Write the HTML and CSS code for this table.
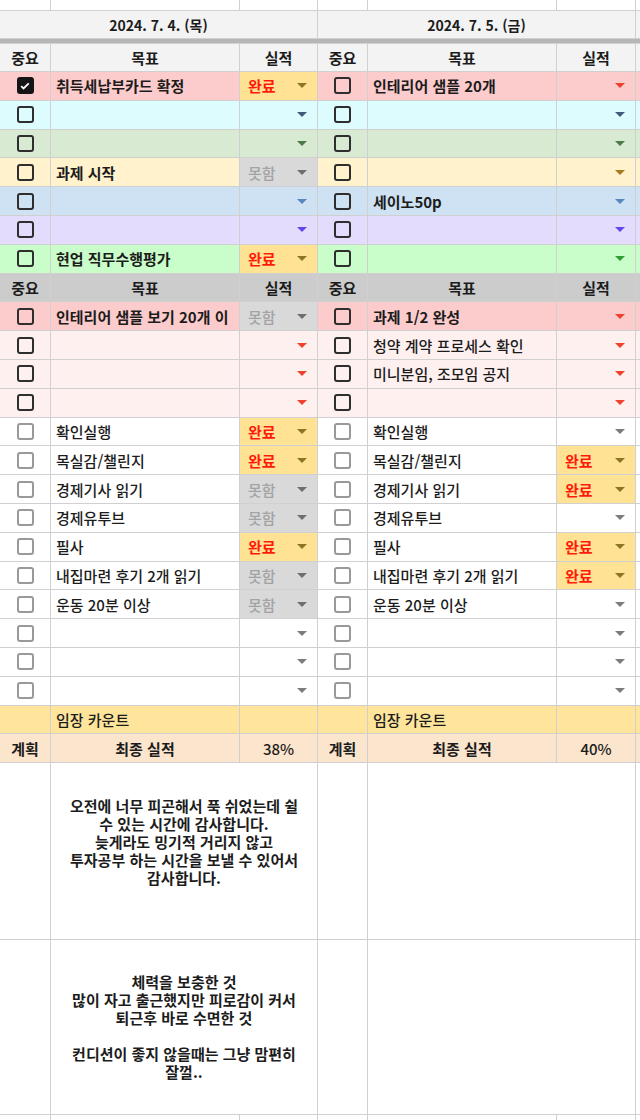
FILE: index.html
```html
<!DOCTYPE html>
<html lang="ko">
<head>
    <meta charset="UTF-8">
    <meta name="viewport" content="width=device-width, initial-scale=1.0">
    <title>Daily Goals</title>
    <link rel="stylesheet" href="styles.css">
</head>
<body>

<div class="sheet" id="sheet"></div>

<script>
    const days = [
        {
            date: '2024. 7. 4. (목)',
            top: [
                {c: true, t: '취득세납부카드 확정', s: 'done'},
                {}, {},
                {t: '과제 시작', s: 'miss'},
                {}, {},
                {t: '현업 직무수행평가', s: 'done'}
            ],
            mid: [{t: '인테리어 샘플 보기 20개 이', s: 'miss'}, {}, {}, {}],
            routine: [
                {t: '확인실행', s: 'done'},
                {t: '목실감/챌린지', s: 'done'},
                {t: '경제기사 읽기', s: 'miss'},
                {t: '경제유투브', s: 'miss'},
                {t: '필사', s: 'done'},
                {t: '내집마련 후기 2개 읽기', s: 'miss'},
                {t: '운동 20분 이상', s: 'miss'},
                {}, {}, {}
            ],
            rate: '38%',
            notes: [
                '오전에 너무 피곤해서 푹 쉬었는데 쉴<br>수 있는 시간에 감사합니다.<br>늦게라도 밍기적 거리지 않고<br>투자공부 하는 시간을 보낼 수 있어서<br>감사합니다.<br>&nbsp;',
                '체력을 보충한 것<br>많이 자고 출근했지만 피로감이 커서<br>퇴근후 바로 수면한 것<br>&nbsp;<br>컨디션이 좋지 않을때는 그냥 맘편히<br>잘껄..'
            ]
        },
        {
            date: '2024. 7. 5. (금)',
            top: [
                {t: '인테리어 샘플 20개'},
                {}, {}, {},
                {t: '세이노50p'},
                {}, {}
            ],
            mid: [{t: '과제 1/2 완성'}, {t: '청약 계약 프로세스 확인'}, {t: '미니분임, 조모임 공지'}, {}],
            routine: [
                {t: '확인실행'},
                {t: '목실감/챌린지', s: 'done'},
                {t: '경제기사 읽기', s: 'done'},
                {t: '경제유투브'},
                {t: '필사', s: 'done'},
                {t: '내집마련 후기 2개 읽기', s: 'done'},
                {t: '운동 20분 이상'},
                {}, {}, {}
            ],
            rate: '40%',
            notes: ['', '']
        }
    ];

    const topColors = ['pink', 'cyan', 'green', 'yellow', 'blue', 'purple', 'lime'];
    const midColors = ['pink', 'rose', 'rose', 'rose'];
    const sheet = document.getElementById('sheet');

    function add(cls, html) {
        const d = document.createElement('div');
        d.className = 'cell ' + cls;
        if (html) d.innerHTML = html;
        sheet.appendChild(d);
    }

    function box(checked, light) {
        if (checked) {
            return '<span class="box checked"><svg viewBox="0 0 16 16" width="12" height="12"><path d="M3 8.2l3 3L13 4.5" stroke="#fff" stroke-width="2.4" fill="none"/></svg></span>';
        }
        return '<span class="box' + (light ? ' light' : '') + '"></span>';
    }

    function itemRow(color, item, opts) {
        add(color + ' center', box(item.c, opts.light));
        add(color + ' goal' + (opts.bold ? ' bold' : ''), item.t || '');
        let label = '';
        if (item.s === 'done') label = '<span>완료</span>';
        if (item.s === 'miss') label = '<span>못함</span>';
        add(color + ' status ' + (item.s || ''), label + '<span class="arrow"></span>');
    }

    function header(cls) {
        days.forEach(() => {
            add(cls + ' center bold', '중요');
            add(cls + ' center bold', '목표');
            add(cls + ' center bold', '실적');
        });
        add(cls);
    }

    // top partial row
    for (let i = 0; i < 7; i++) add('');

    days.forEach(day => add('date span3 center bold', day.date));
    add('date');
    add('band span-all');

    header('head-light');
    topColors.forEach((color, i) => {
        days.forEach(day => itemRow(color, day.top[i], {bold: true}));
        add(color);
    });

    header('head-dark');
    midColors.forEach((color, i) => {
        days.forEach(day => itemRow(color, day.mid[i], {bold: color === 'pink'}));
        add(color);
    });

    for (let i = 0; i < 10; i++) {
        days.forEach(day => itemRow('plain', day.routine[i], {light: true}));
        add('plain');
    }

    days.forEach(() => {
        add('count');
        add('count goal', '임장 카운트');
        add('count');
    });
    add('count');

    days.forEach(day => {
        add('plan center bold', '계획');
        add('plan center bold', '최종 실적');
        add('plan center', day.rate);
    });
    add('plan');

    for (let n = 0; n < 2; n++) {
        days.forEach(day => {
            add('');
            add('note span2', day.notes[n]);
        });
        add('');
    }

    for (let i = 0; i < 7; i++) add('');
</script>

</body>
</html>
```

FILE: styles.css
```css
body {
    margin: 0;
    font-family: "Noto Sans CJK KR", "Noto Sans", sans-serif;
    color: #1c1c1c;
}
.sheet {
    display: grid;
    grid-template-columns: 50px 188px 77px 49px 188px 78px 1fr;
    grid-template-rows: 10px 27px 4px 27px repeat(24, 27.8px) 176px 174px 20px;
    gap: 1px;
    width: 640px;
    height: 1120px;
    overflow: hidden;
    background: #d0d0d0;
}
.cell {
    display: flex;
    align-items: center;
    min-width: 0;
    overflow: hidden;
    white-space: nowrap;
    font-size: 15px;
    font-weight: 500;
    line-height: 1;
    background: #fff;
}
.center {
    justify-content: center;
}
.bold {
    font-weight: bold;
}
.span2 {
    grid-column: span 2;
}
.span3 {
    grid-column: span 3;
}
.span-all {
    grid-column: 1 / -1;
}
.goal {
    padding-left: 5px;
}

/* header rows */
.date {
    background: #f3f3f3;
    font-size: 14px;
}
.band {
    background: #b6b6b6;
}
.head-light {
    background: #f3f3f3;
}
.head-dark {
    background: #cccccc;
}

/* row colours */
.pink { background: #fccccc; --arrow: #f0412f; }
.cyan { background: #dcfcfd; --arrow: #3f5c7c; }
.green { background: #d9ead3; --arrow: #4c7a4c; }
.yellow { background: #fff2cc; --arrow: #a57d1c; }
.blue { background: #cfe2f3; --arrow: #5985c0; }
.purple { background: #e3dcfd; --arrow: #6546ee; }
.lime { background: #c9fdc9; --arrow: #2f9f35; }
.rose { background: #fff0f0; --arrow: #f0412f; }
.plain { --arrow: #7c7c7c; }
.count { background: #ffe59c; }
.plan { background: #fce5cd; }

/* status dropdown */
.status {
    justify-content: space-between;
    padding: 0 10px 0 8px;
}
.status.done {
    background: #ffe294;
    color: #ff1a0a;
    font-weight: bold;
    --arrow: #8c7624;
}
.status.miss {
    background: #d9d9d9;
    color: #a3a3a3;
    --arrow: #6f6f6f;
}
.arrow {
    margin-left: auto;
    width: 0;
    height: 0;
    border-left: 5px solid transparent;
    border-right: 5px solid transparent;
    border-top: 5px solid var(--arrow, #7c7c7c);
}

/* checkbox */
.box {
    display: flex;
    align-items: center;
    justify-content: center;
    box-sizing: border-box;
    width: 17px;
    height: 17px;
    border: 2px solid #2e2e2e;
    border-radius: 3px;
}
.box.light {
    border-color: #999;
}
.box.checked {
    background: #151515;
    border-color: #151515;
}

/* notes */
.note {
    justify-content: center;
    text-align: center;
    white-space: normal;
    font-weight: bold;
    line-height: 18px;
    padding: 0 4px;
}
```
